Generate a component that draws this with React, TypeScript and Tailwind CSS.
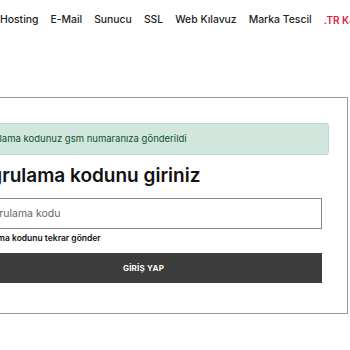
import React from "react";

const navItems = ["Hosting", "E-Mail", "Sunucu", "SSL", "Web Kılavuz", "Marka Tescil"];

export default function App() {
  return (
    <div
      className="w-[350px] h-[350px] overflow-hidden bg-white relative"
      style={{ fontFamily: "Inter, 'Open Sans', sans-serif" }}
    >
      {/* Top nav */}
      <nav className="flex items-center gap-[12px] h-[40px] whitespace-nowrap text-[10.4px] font-medium text-[#222]">
        {navItems.map((item) => (
          <span key={item}>{item}</span>
        ))}
        <span className="text-[#e3213b] font-semibold text-[10px]">.TR Kampanya</span>
      </nav>

      {/* Verification box */}
      <div className="mt-[57px] ml-[-61px] w-[409px] h-[217px] border border-[#9a9a9a] px-[18px] pt-[25px]">
        <div className="h-[32px] rounded-[3px] bg-[#d1e7dd] border border-[#badbcc] flex items-center px-[13px] text-[9.5px] text-[#0f5132] whitespace-nowrap">
          Doğrulama kodunuz gsm numaranıza gönderildi
        </div>

        <div className="px-[7px]">
          <h2 className="mt-[6px] text-[19px] leading-[30px] font-semibold text-[#111] whitespace-nowrap">
            Doğrulama kodunu giriniz
          </h2>

          <input
            className="mt-[7px] w-full h-[31px] border border-[#8a8a8a] px-[13px] text-[10.5px] text-[#333] placeholder:text-[#666] outline-none"
            placeholder="Doğrulama kodu"
          />

          <div className="mt-[2px] text-[8.5px] font-semibold text-[#111] whitespace-nowrap leading-[14px]">
            Doğrulama kodunu tekrar gönder
          </div>

          <button className="mt-[8px] w-full h-[30px] bg-[#3c3c3c] text-white text-[8px] font-bold tracking-[0.2px]">
            GİRİŞ YAP
          </button>
        </div>
      </div>
    </div>
  );
}
